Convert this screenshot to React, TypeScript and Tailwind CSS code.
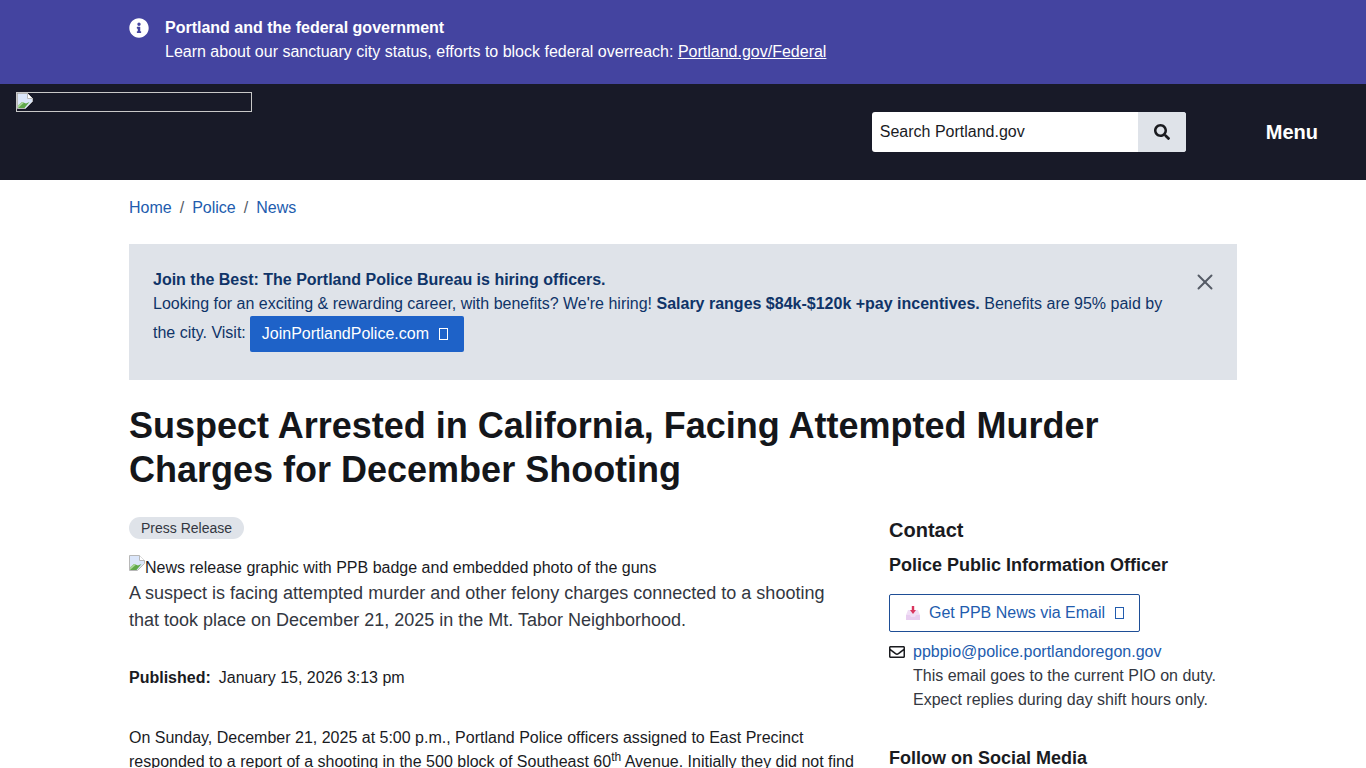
import { X } from 'lucide-react';
import { FaInfoCircle, FaRegEnvelope, FaSearch } from 'react-icons/fa';

function BrokenImage({ className }: { className?: string }) {
  return (
    <svg viewBox="0 0 16 16" width="16" height="16" className={className} aria-hidden="true">
      <path d="M0.5 0.5H10.5L15.5 5.5V8.5L8.5 15.5H0.5Z" fill="#dbe6fa" stroke="#b8b8b8" />
      <path d="M10.5 0.5V5.5H15.5" fill="#ffffff" stroke="#b8b8b8" />
      <path d="M1 15V12.5L5 9L9 10.5L12.5 9L7.5 15Z" fill="#5fa84a" />
      <path d="M1 12.5L5 9L7 9.8L1 15Z" fill="#a9d79a" />
    </svg>
  );
}

function Tofu({ className }: { className?: string }) {
  return <span className={`inline-block h-[12px] w-[9px] border border-current ${className ?? ''}`} aria-hidden="true" />;
}

function InboxIcon() {
  return (
    <svg viewBox="0 0 16 16" width="16" height="16" className="shrink-0" aria-hidden="true">
      <path d="M3 5H13L15 10V15H1V10Z" fill="#f0def5" />
      <path d="M1 10H5L6 12H10L11 10H15V15H1Z" fill="#e8cdf0" />
      <path d="M6.8 1H9.2V5H11L8 9L5 5H6.8Z" fill="#d9365e" />
    </svg>
  );
}

export default function App() {
  return (
    <div className="h-[768px] overflow-hidden bg-white font-['Liberation_Sans',Arial,sans-serif] text-base text-[#1a1b1f]">
      {/* federal alert */}
      <div className="h-[84px] bg-[#4444a0] pl-[129px] pt-4 text-white">
        <div className="flex gap-4">
          <div className="pt-0.5">
            <FaInfoCircle size={20} />
          </div>
          <div className="leading-6">
            <p className="font-bold">Portland and the federal government</p>
            <p>
              Learn about our sanctuary city status, efforts to block federal overreach:{' '}
              <a href="#" className="underline">Portland.gov/Federal</a>
            </p>
          </div>
        </div>
      </div>

      {/* header */}
      <header className="flex h-[96px] items-start justify-between bg-[#181a28] pl-4 pr-12 pt-2">
        <div className="h-5 w-[236px] border border-[#c8c8c8]">
          <BrokenImage />
        </div>
        <div className="flex items-center pt-5">
          <div className="flex h-10 w-[314px] overflow-hidden rounded-[3px] bg-white">
            <div className="flex flex-1 items-center pl-2 text-[#1a1b1f]">Search Portland.gov</div>
            <button className="flex w-12 items-center justify-center bg-[#dfe3e9]">
              <FaSearch size={16} className="text-[#1a1b1f]" />
            </button>
          </div>
          <button className="ml-20 text-xl font-bold text-white">Menu</button>
        </div>
      </header>

      <main className="mx-[129px]">
        <nav className="flex h-[64px] items-start gap-2 pt-4 text-[#225cae]">
          <a href="#">Home</a>
          <span className="text-[#555b66]">/</span>
          <a href="#">Police</a>
          <span className="text-[#555b66]">/</span>
          <a href="#">News</a>
        </nav>

        {/* hiring banner */}
        <div className="relative h-[136px] bg-[#dfe3e9] pl-6 pr-[74px] pt-6 text-[#0f3468]">
          <p className="font-bold leading-6">Join the Best: The Portland Police Bureau is hiring officers.</p>
          <p className="leading-6">
            Looking for an exciting &amp; rewarding career, with benefits? We're hiring! <b>Salary ranges $84k-$120k +pay incentives.</b> Benefits are 95% paid by
          </p>
          <p className="flex items-center gap-[4px]">
            <span className="-translate-y-px">the city. Visit:</span>
            <a href="#" className="flex h-9 items-center gap-[10px] rounded-[2px] bg-[#1e62c8] pl-3 pr-4 text-white">
              JoinPortlandPolice.com <Tofu />
            </a>
          </p>
          <button className="absolute right-[19px] top-[25px] text-[#555b66]" aria-label="Close">
            <X size={26} strokeWidth={1.8} />
          </button>
        </div>

        <h1 className="mt-6 text-4xl font-bold leading-[44px] text-[#14161a]">
          Suspect Arrested in California, Facing Attempted Murder
          <br />
          Charges for December Shooting
        </h1>

        <div className="mt-6 flex gap-[32px]">
          <article className="w-[728px] shrink-0">
            <span className="inline-block h-[22px] rounded-full bg-[#dfe3e9] px-3 text-sm leading-[22px] text-[#333741]">Press Release</span>
            <div className="mt-[16px] flex h-[24px] items-start">
              <BrokenImage className="-mt-[1px] shrink-0" />
              <span className="leading-6">News release graphic with PPB badge and embedded photo of the guns</span>
            </div>
            <p className="text-lg leading-[27px] text-[#333741]">
              A suspect is facing attempted murder and other felony charges connected to a shooting that took place on December 21, 2025 in the Mt. Tabor Neighborhood.
            </p>
            <p className="mt-8 leading-6">
              <b>Published:</b>
              <span className="ml-2">January 15, 2026 3:13 pm</span>
            </p>
            <p className="mt-9 leading-6">
              On Sunday, December 21, 2025 at 5:00 p.m., Portland Police officers assigned to East Precinct responded to a report of a shooting in the 500 block of Southeast 60<sup className="text-xs">th</sup> Avenue. Initially they did not find
            </p>
          </article>

          <aside className="flex-1">
            <h2 className="text-xl font-bold leading-7">Contact</h2>
            <h3 className="mt-2 text-lg font-bold leading-[27px]">Police Public Information Officer</h3>
            <a href="#" className="mt-[15px] flex h-[38px] w-[251px] items-center gap-2 rounded-[2px] border border-[#1e4e96] pl-[15px] text-[#225cae]">
              <InboxIcon />
              Get PPB News via Email
              <Tofu className="ml-[2px]" />
            </a>
            <div className="mt-2 flex gap-2">
              <FaRegEnvelope size={16} className="mt-1 shrink-0" />
              <div className="leading-6">
                <a href="#" className="text-[#225cae]">ppbpio@police.portlandoregon.gov</a>
                <p className="text-[#333741]">This email goes to the current PIO on duty.</p>
                <p className="text-[#333741]">Expect replies during day shift hours only.</p>
              </div>
            </div>
            <h3 className="mt-[33px] text-lg font-bold leading-[27px]">Follow on Social Media</h3>
          </aside>
        </div>
      </main>
    </div>
  );
}
